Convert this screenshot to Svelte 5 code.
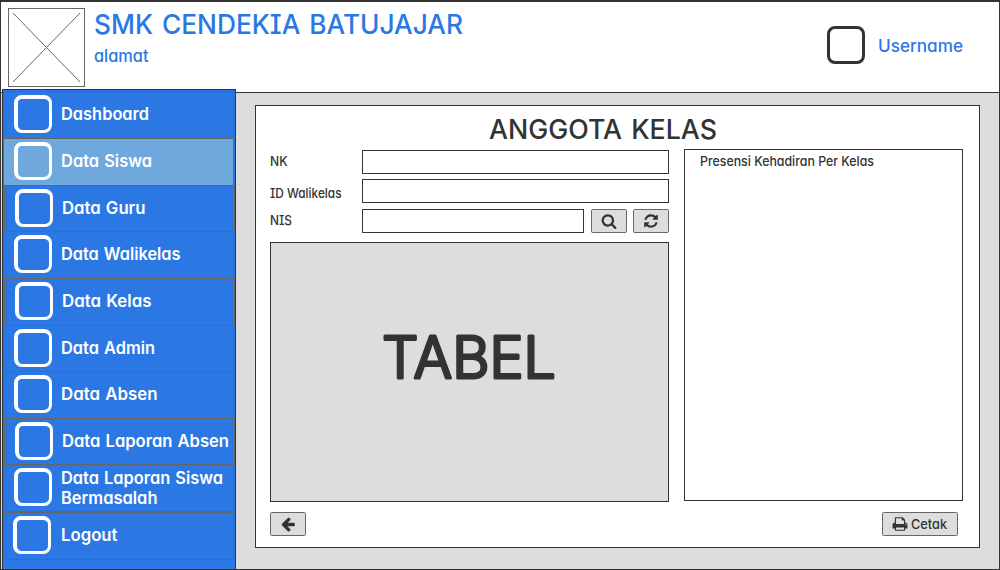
<script>
  const menu = [
    { lines: [['Dashboard', 88]], height: 47 },
    { lines: [['Data Siswa', 91]], height: 47, active: true },
    { lines: [['Data Guru', 83.5]], height: 46, shifted: true },
    { lines: [['Data Walikelas', 119.5]], height: 47 },
    { lines: [['Data Kelas', 89.5]], height: 47, shifted: true },
    { lines: [['Data Admin', 94]], height: 46 },
    { lines: [['Data Absen', 96.5]], height: 47 },
    { lines: [['Data Laporan Absen', 167]], height: 46, shifted: true },
    { lines: [['Data Laporan Siswa', 162]  , ['Bermasalah', 96.5]], height: 47 },
    { lines: [['Logout', 56.5]], height: 48, last: true }
  ];

  const icons = {
    search: 'M1216 832q0-185-131.5-316.5t-316.5-131.5-316.5 131.5-131.5 316.5 131.5 316.5 316.5 131.5 316.5-131.5 131.5-316.5zm512 832q0 52-38 90t-90 38q-54 0-90-38l-343-342q-179 124-399 124-143 0-273.5-55.5t-225-150-150-225-55.5-273.5 55.5-273.5 150-225 225-150 273.5-55.5 273.5 55.5 225 150 150 225 55.5 273.5q0 220-124 399l343 343q37 37 37 90z',
    refresh: 'M1639 1056q0 5-1 7-64 268-268 434.5t-478 166.5q-146 0-282.5-55t-243.5-157l-129 129q-19 19-45 19t-45-19-19-45v-448q0-26 19-45t45-19h448q26 0 45 19t19 45-19 45l-137 137q71 66 161 102t187 36q134 0 250-65t186-179q11-17 53-117 8-23 30-23h192q13 0 22.5 9.5t9.5 22.5zm25-800v448q0 26-19 45t-45 19h-448q-26 0-45-19t-19-45 19-45l138-138q-148-137-349-137-134 0-250 65t-186 179q-11 17-53 117-8 23-30 23h-199q-13 0-22.5-9.5t-9.5-22.5v-7q65-268 270-434.5t480-166.5q146 0 284 55.5t245 156.5l130-129q19-19 45-19t45 19 19 45z',
    back: 'M1664 896v128q0 53-32.5 90.5t-84.5 37.5h-704l293 294q38 36 38 90t-38 90l-75 76q-37 37-90 37-52 0-91-37l-651-652q-37-37-37-90 0-52 37-91l651-650q38-38 91-38 52 0 90 38l75 74q38 38 38 91t-38 91l-293 293h704q52 0 84.5 37.5t32.5 90.5z',
    print: 'M448 1536h896v-256h-896v256zm0-640h896v-384h-160q-40 0-68-28t-28-68v-160h-640v640zm1152 64q0-26-19-45t-45-19-45 19-19 45 19 45 45 19 45-19 19-45zm128 0v416q0 13-9.5 22.5t-22.5 9.5h-224v160q0 40-28 68t-68 28h-960q-40 0-68-28t-28-68v-160h-224q-13 0-22.5-9.5t-9.5-22.5v-416q0-79 56.5-135.5t135.5-56.5h64v-544q0-40 28-68t68-28h672q40 0 88 20t76 48l152 152q28 28 48 76t20 88v256h64q79 0 135.5 56.5t56.5 135.5z'
  };
</script>

{#snippet label(text, width, size, kind)}
  <svg class="label {kind}" width={width + 2} height={size + 3} aria-label={text}>
    <text x="0" y={size - 1} font-size={size} textLength={width} lengthAdjust="spacingAndGlyphs">{text}</text>
  </svg>
{/snippet}

{#snippet icon(name)}
  <svg class="icon" width="16" height="16" viewBox="0 0 1792 1792"><path d={icons[name]} /></svg>
{/snippet}

<div class="app">
  <header>
    <svg class="logo" width="77" height="79">
      <rect x=".5" y=".5" width="76" height="78" />
      <path d="M5 5L72 74M72 5L5 74" />
    </svg>
    <div class="school">
      <h1>{@render label('SMK CENDEKIA BATUJAJAR', 369, 27, 'blue title')}</h1>
      {@render label('alamat', 54.5, 17, 'blue')}
    </div>
    <div class="user">
      <span class="box"></span>
      {@render label('Username', 85, 17, 'blue')}
    </div>
  </header>

  <div class="body">
    <nav>
      {#each menu as item}
        <a class="item" class:active={item.active} class:shifted={item.shifted} class:last={item.last} style="height: {item.height + 1}px">
          <span class="box"></span>
          <span class="lines" class:double={item.lines.length > 1}>
            {#each item.lines as [text, width]}
              {@render label(text, width, 17, 'white')}
            {/each}
          </span>
        </a>
      {/each}
    </nav>

    <main>
      <section class="card">
        <h2>{@render label('ANGGOTA KELAS', 228, 27, 'heading')}</h2>
        <div class="columns">
          <div class="left">
            <div class="field first">
              {@render label('NK', 17.5, 13.5, '')}
              <div class="input"></div>
            </div>
            <div class="field second">
              {@render label('ID Walikelas', 71.5, 13.5, '')}
              <div class="input"></div>
            </div>
            <div class="field third">
              {@render label('NIS', 22, 13.5, '')}
              <div class="input"></div>
              <button aria-label="search">{@render icon('search')}</button>
              <button aria-label="refresh">{@render icon('refresh')}</button>
            </div>
            <div class="table">
              <svg class="big" width="184" height="84">
                <text x="4" y="61" font-size="57" textLength="174" lengthAdjust="spacingAndGlyphs">TABEL</text>
              </svg>
            </div>
          </div>
          <div class="panel">
            {@render label('Presensi Kehadiran Per Kelas', 174, 13.5, '')}
          </div>
        </div>
        <footer>
          <button aria-label="back">{@render icon('back')}</button>
          <button class="print">{@render icon('print')}{@render label('Cetak', 36, 13.5, '')}</button>
        </footer>
      </section>
    </main>
  </div>
</div>

<style>
  :global(body) { margin: 0; }
  .app, .app * { box-sizing: border-box; }
  .app {
    width: 1000px;
    height: 570px;
    border: 1px solid #333;
    border-top-width: 2px;
    background: #ddd;
    font-family: Inter, "Liberation Sans", sans-serif;
    display: flex;
    flex-direction: column;
    overflow: hidden;
  }
  svg { display: block; flex: none; }
  .label { overflow: visible; font-weight: 500; fill: #333; font-feature-settings: "cv11", "cv08"; }
  .blue { fill: #2b78e4; }
  .white { fill: #fff; font-weight: 600; word-spacing: 1px; }
  .title, .heading { font-weight: 450; word-spacing: 2px; }
  h1, h2 { margin: 0; }

  header {
    flex: none;
    height: 91px;
    display: flex;
    align-items: flex-start;
    background: #fff;
    border-bottom: 1px solid #333;
    padding: 6px 34px 0 7px;
  }
  .logo { fill: none; stroke: #666; }
  .school { margin-left: 9px; display: flex; flex-direction: column; }
  .school h1 { height: 38px; }
  .user { margin-left: auto; margin-top: 18px; display: flex; align-items: center; gap: 13px; }
  .box {
    flex: none;
    width: 38px;
    height: 38px;
    border: 3px solid #333;
    border-radius: 8px;
  }
  .user .label { margin-top: 2px; }

  .body { flex: 1; min-height: 0; display: flex; }
  nav {
    position: relative;
    width: 234px;
    margin: -4px 0 0 1px;
    padding-top: 1px;
    border: 1px solid #333;
    border-bottom: 0;
    background: #2b78e4;
  }
  .item {
    width: 231px;
    margin-bottom: -1px;
    border: 1px solid #666;
    padding: 3px 0 0 10px;
    display: flex;
    align-items: flex-start;
    gap: 9px;
    background: #2b78e4;
  }
  .item.active { background: #6fa8dc; }
  .item.shifted { margin-left: 1px; position: relative; }
  .item.last { padding-left: 9px; gap: 10px; border-top-width: 2px; }
  .item .box { border: solid #fff; border-width: 4px 3px 3px 4px; }
  .lines { height: 38px; display: flex; flex-direction: column; justify-content: center; }
  .lines.double { padding-top: 2px; }

  main { flex: 1; padding: 12px 19px 21px; }
  .card {
    height: 443px;
    border: 1px solid #333;
    background: #fff;
    padding: 7px 16px 0 14px;
  }
  h2 { height: 36px; padding-left: 219px; }
  .columns { display: flex; gap: 15px; height: 353px; }
  .left { width: 399px; padding-top: 1px; }
  .field { display: flex; height: 24px; }
  .field .label { width: 92px; }
  .first .label { margin-top: 3px; }
  .second { margin-top: 5px; }
  .second .label { margin-top: 6px; }
  .third { margin-top: 6px; }
  .third .label { margin-top: 3px; }
  .input { flex: 1; border: 1px solid #333; }
  button {
    width: 36px;
    height: 24px;
    padding: 0;
    border: 1px solid #666;
    border-radius: 1.5px;
    background: #ddd;
    font-family: inherit;
    display: flex;
    align-items: center;
    justify-content: center;
  }
  .third button { margin-left: 7px; }
  .third button + button { margin-left: 6px; }
  .icon { fill: #333; }
  .table {
    height: 260px;
    margin-top: 9px;
    padding-top: 74px;
    border: 1px solid #333;
    background: #ddd;
    display: flex;
    justify-content: center;
  }
  .big { overflow: visible; font-weight: 300; fill: #333; stroke: #333; stroke-width: 3; stroke-linejoin: round; }
  .panel { width: 279px; height: 352px; border: 1px solid #333; padding: 3px 0 0 15px; }
  footer { display: flex; justify-content: space-between; margin: 10px 5px 0 0; }
  .print { width: 76px; gap: 3px; padding-left: 1px; }
</style>
